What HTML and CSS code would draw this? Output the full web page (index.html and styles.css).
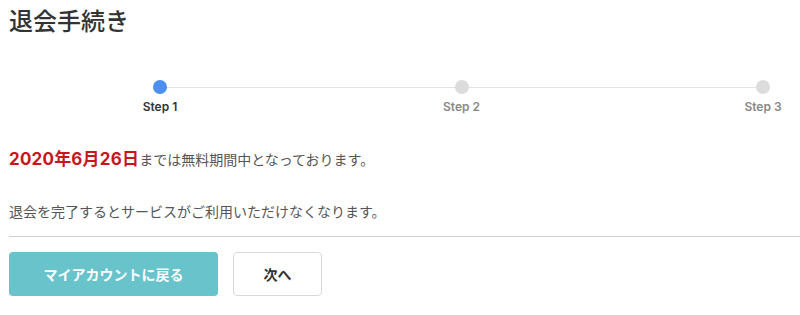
FILE: index.html
```html
<!DOCTYPE html>
<html lang="ja">
<head>
<meta charset="utf-8">
<title>退会手続き</title>
<link rel="stylesheet" href="styles.css">
</head>
<body>
<div class="page">
  <h1 class="title">退会手続き</h1>
  <div class="stepper">
    <div class="step active">
      <span class="dot"></span>
      <span class="label">Step 1</span>
    </div>
    <div class="step">
      <span class="dot"></span>
      <span class="label">Step 2</span>
    </div>
    <div class="step">
      <span class="dot"></span>
      <span class="label">Step 3</span>
    </div>
  </div>
  <p class="notice first"><strong class="date">2020年6月26日</strong>までは無料期間中となっております。</p>
  <p class="notice second">退会を完了するとサービスがご利用いただけなくなります。</p>
  <hr class="divider">
  <div class="actions">
    <button class="btn btn-primary">マイアカウントに戻る</button>
    <button class="btn btn-outline">次へ</button>
  </div>
</div>
</body>
</html>
```

FILE: styles.css
```css
html, body {
  margin: 0;
  padding: 0;
  background: #fff;
}
body {
  font-family: "Noto Sans CJK JP", "Noto Sans", sans-serif;
  color: #444;
}
.page {
  padding-left: 9px;
  padding-top: 4px;
}
.title {
  margin: 0;
  font-size: 24px;
  line-height: 32px;
  font-weight: 500;
  color: #333;
}
.stepper {
  position: relative;
  display: flex;
  justify-content: space-between;
  margin-top: 44px;
  padding-left: 121px;
  padding-right: 7px;
}
.stepper::before {
  content: "";
  position: absolute;
  left: 151px;
  right: 37px;
  top: 7px;
  height: 1px;
  background: #e3e3e3;
}
.step {
  width: 60px;
  display: flex;
  flex-direction: column;
  align-items: center;
  position: relative;
}
.dot {
  width: 14px;
  height: 14px;
  border-radius: 50%;
  background: #dcdcdc;
}
.step.active .dot {
  background: #4d8ff0;
}
.label {
  margin-top: 5px;
  font-family: "Inter", "Noto Sans", sans-serif;
  font-size: 12px;
  font-weight: 600;
  line-height: 16px;
  color: #888;
}
.step.active .label {
  color: #333;
}
.notice {
  margin: 0;
  font-size: 14px;
  line-height: 24px;
  color: #555;
}
.first {
  margin-top: 32px;
}
.second {
  margin-top: 28px;
}
.date {
  font-family: "Inter", "Noto Sans CJK JP", sans-serif;
  font-size: 17px;
  font-weight: 700;
  color: #c8161d;
  letter-spacing: 0.2px;
}
.divider {
  margin: 13px 0 0 0;
  border: 0;
  border-top: 1px solid #cfcfcf;
}
.actions {
  display: flex;
  gap: 15px;
  margin-top: 15px;
}
.btn {
  font-family: "Noto Sans CJK JP", sans-serif;
  font-size: 14px;
  font-weight: 700;
  height: 44px;
  border-radius: 4px;
  padding: 0;
  cursor: pointer;
}
.btn-primary {
  width: 209px;
  background: #68c3ca;
  color: #fff;
  border: 0;
}
.btn-outline {
  width: 89px;
  background: #fff;
  color: #333;
  border: 1px solid #d9d9d9;
}
```
